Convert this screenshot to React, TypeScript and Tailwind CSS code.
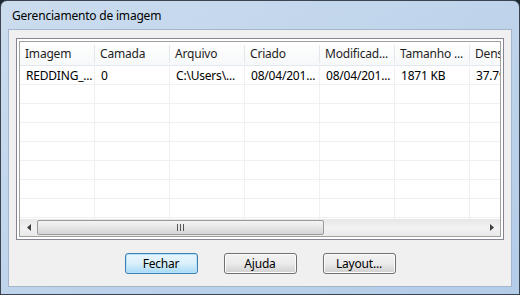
import React from 'react';

const columns = ['Imagem', 'Camada', 'Arquivo', 'Criado', 'Modificad...', 'Tamanho ...', 'Dens'];
const firstRow = ['REDDING_...', '0', 'C:\\Users\\...', '08/04/201...', '08/04/201...', '1871 KB', '37.79'];
const emptyRows = 8;

const font = { fontFamily: '"Noto Sans", "Open Sans", sans-serif' };

const Cell = ({ children, header }: { children?: React.ReactNode; header?: boolean }) => (
  <div
    className={
      'w-[75px] shrink-0 border-r pl-[5px] whitespace-nowrap overflow-hidden ' +
      (header ? 'border-[#e3e8ee]' : 'border-[#f0f0f0]')
    }
  >
    {children}
  </div>
);

const Button = ({ label, primary }: { label: string; primary?: boolean }) => (
  <button
    className={
      'w-[73px] h-[21px] rounded-[3px] border text-[12px] leading-none text-black ' +
      (primary
        ? 'border-[#3c7fb1] bg-gradient-to-b from-[#eaf6fd] via-[#d9f0fc] to-[#a7d9f5] shadow-[inset_0_0_0_1px_#b6e3fb]'
        : 'border-[#707070] bg-gradient-to-b from-[#f2f2f2] via-[#ebebeb] to-[#cfcfcf] shadow-[inset_0_0_0_1px_#fcfcfc]')
    }
  >
    {label}
  </button>
);

export default function App() {
  return (
    <div className="w-[520px] h-[295px] bg-[#1d2a36] text-[12px] text-black tracking-[-0.2px]" style={font}>
      <div className="w-[520px] h-[295px] flex flex-col rounded-t-[7px] border border-[#3b4450] bg-gradient-to-br from-[#cbdcee] to-[#b3cce8] overflow-hidden">
        {/* title bar */}
        <div className="h-[28px] shrink-0 flex items-center pl-[11px] pt-[2px]">
          <span className="text-[12px]">Gerenciamento de imagem</span>
        </div>

        {/* client area */}
        <div className="flex-1 mx-[7px] mb-[7px] bg-[#f0f0f0] border border-[#a3b6cb] flex flex-col px-[7px] pt-[8px]">
          {/* list view */}
          <div className="h-[202px] border border-[#828790] bg-white p-[2px]">
            <div className="h-full border border-[#a0a0a0] flex flex-col overflow-hidden bg-white">
              <div className="h-[24px] shrink-0 flex items-center border-b border-[#e3e8ee] bg-gradient-to-b from-white to-[#f7f8f9]">
                {columns.map((c) => (
                  <Cell key={c} header>
                    <span className="text-[#1e1e1e]">{c}</span>
                  </Cell>
                ))}
              </div>
              <div className="flex-1 overflow-hidden">
                <div className="h-[19px] flex items-stretch border-b border-[#f0f0f0]">
                  {firstRow.map((v, i) => (
                    <Cell key={i}>
                      <span className="leading-[19px] pl-[1px]">{v}</span>
                    </Cell>
                  ))}
                </div>
                {Array.from({ length: emptyRows }).map((_, r) => (
                  <div key={r} className="h-[19px] flex items-stretch border-b border-[#f0f0f0]">
                    {columns.map((c) => (
                      <Cell key={c} />
                    ))}
                  </div>
                ))}
              </div>

              {/* horizontal scrollbar */}
              <div className="h-[17px] shrink-0 flex items-stretch bg-gradient-to-b from-[#e6e6e6] via-[#f2f2f2] to-[#e9e9e9]">
                <div className="w-[17px] flex items-center justify-center">
                  <svg width="4" height="7" viewBox="0 0 4 7">
                    <path d="M4 0 L0 3.5 L4 7 Z" fill="#404040" />
                  </svg>
                </div>
                <div className="w-[287px] my-[1px] rounded-[2px] border border-[#9a9a9a] bg-gradient-to-b from-[#f4f4f4] via-[#e6e6e6] to-[#d4d4d4] flex items-center justify-center gap-[2px]">
                  <div className="w-[1px] h-[7px] bg-[#555]" />
                  <div className="w-[1px] h-[7px] bg-[#555]" />
                  <div className="w-[1px] h-[7px] bg-[#555]" />
                </div>
                <div className="flex-1" />
                <div className="w-[17px] flex items-center justify-center">
                  <svg width="4" height="7" viewBox="0 0 4 7">
                    <path d="M0 0 L4 3.5 L0 7 Z" fill="#404040" />
                  </svg>
                </div>
              </div>
            </div>
          </div>

          {/* buttons */}
          <div className="flex justify-center gap-[26px] pt-[13px]">
            <Button label="Fechar" primary />
            <Button label="Ajuda" />
            <Button label="Layout..." />
          </div>
        </div>
      </div>
    </div>
  );
}
